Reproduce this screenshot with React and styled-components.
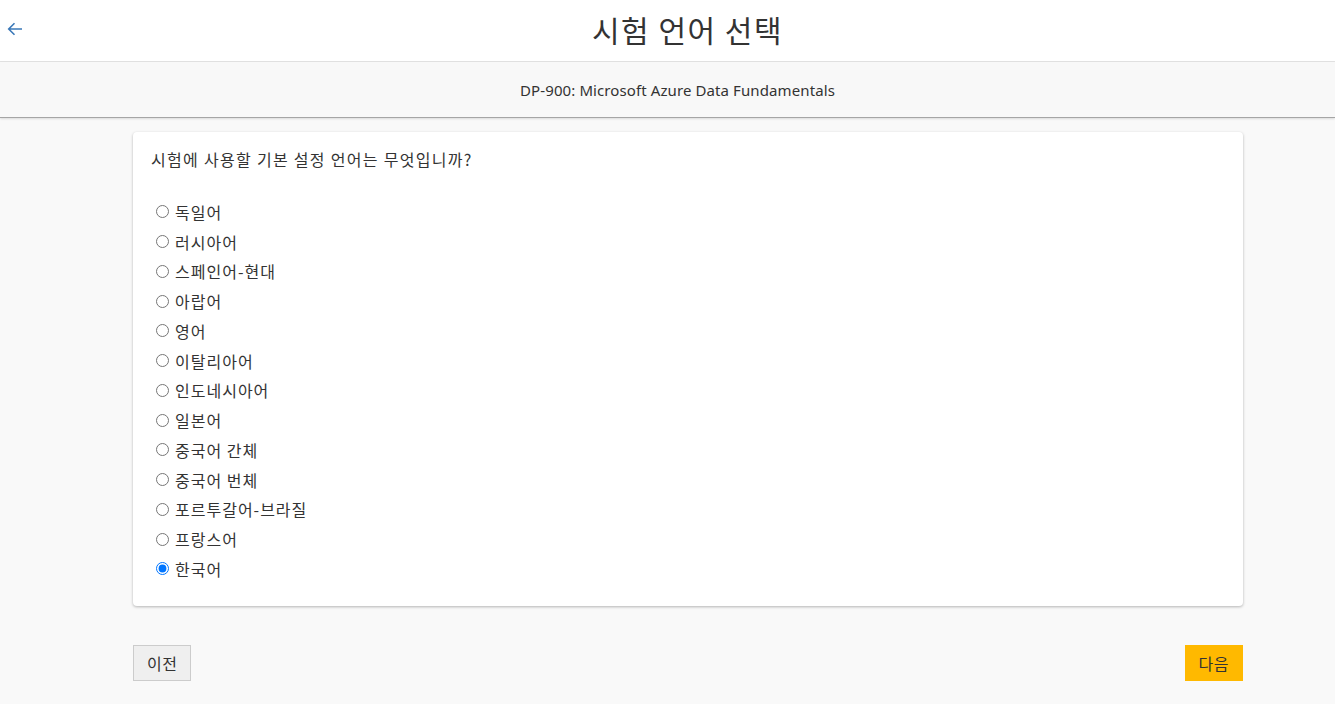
import React, { useState } from "react";
import styled, { createGlobalStyle } from "styled-components";

const Global = createGlobalStyle`
  html, body { margin: 0; padding: 0; }
  body {
    background: #f9f9f9;
    font-family: "Noto Sans CJK KR", "Noto Sans", sans-serif;
    color: #333;
  }
`;

const Page = styled.div`
  min-height: 704px;
  background: #f9f9f9;
`;

const Header = styled.header`
  height: 61px;
  background: #fff;
  border-bottom: 1px solid #e2e2e2;
  display: flex;
  align-items: center;
`;

const BackButton = styled.button`
  width: 40px;
  height: 61px;
  padding: 0 0 3px 7px;
  border: none;
  background: transparent;
  display: flex;
  align-items: center;
  justify-content: flex-start;
  cursor: pointer;
`;

const Title = styled.h1`
  flex: 1;
  margin: 0;
  text-align: center;
  font-size: 30px;
  font-weight: 400;
  letter-spacing: 1.5px;
  color: #333;
  line-height: 1;
  padding-bottom: 4px;
`;

const SubHeader = styled.div`
  height: 55px;
  padding-left: 20px;
  background: #f8f8f8;
  border-bottom: 1px solid #a5a5a5;
  box-shadow: 0 1px 2px rgba(0, 0, 0, 0.12);
  display: flex;
  align-items: center;
  justify-content: center;
  font-family: "Noto Sans", "Noto Sans CJK KR", sans-serif;
  font-size: 15px;
  letter-spacing: 0.1px;
  color: #333;
`;

const Main = styled.main`
  width: 1110px;
  margin-left: 133px;
  padding-top: 14px;
`;

const Card = styled.section`
  background: #fff;
  border-radius: 4px;
  box-shadow: 0 1px 3px rgba(0, 0, 0, 0.28);
  padding: 15px 18px 22px 18px;
`;

const Question = styled.p`
  margin: 0;
  font-size: 16px;
  line-height: 24px;
  color: #333;
  letter-spacing: 1.3px;
`;

const OptionList = styled.div`
  margin-top: 26px;
  display: flex;
  flex-direction: column;
`;

const Option = styled.label`
  display: flex;
  align-items: center;
  height: 29.75px;
  font-size: 16px;
  letter-spacing: 1px;
  color: #333;
  cursor: pointer;

  input {
    width: 13px;
    height: 13px;
    margin: 0 6px 0 5px;
    accent-color: #0075ff;
  }
`;

const Footer = styled.div`
  display: flex;
  justify-content: space-between;
  margin-top: 39px;
`;

const NavButton = styled.button`
  height: 36px;
  padding: 0 13px;
  font-family: "Noto Sans CJK KR", sans-serif;
  font-size: 16px;
  letter-spacing: 0.5px;
  color: #333;
  cursor: pointer;
  background: ${(p) => (p.$primary ? "#ffb900" : "#efefef")};
  border: 1px solid ${(p) => (p.$primary ? "#ffb900" : "#cccccc")};
  border-radius: 0;
`;

const languages = [
  "독일어",
  "러시아어",
  "스페인어-현대",
  "아랍어",
  "영어",
  "이탈리아어",
  "인도네시아어",
  "일본어",
  "중국어 간체",
  "중국어 번체",
  "포르투갈어-브라질",
  "프랑스어",
  "한국어",
];

export default function App() {
  const [lang, setLang] = useState("한국어");
  return (
    <Page>
      <Global />
      <Header>
        <BackButton aria-label="뒤로">
          <svg width="16" height="14" viewBox="0 0 16 14" fill="none">
            <path d="M15 7H2M7.5 1.2L1.7 7l5.8 5.8" stroke="#3a78b8" strokeWidth="1.6" />
          </svg>
        </BackButton>
        <Title>시험 언어 선택</Title>
      </Header>
      <SubHeader>DP-900: Microsoft Azure Data Fundamentals</SubHeader>
      <Main>
        <Card>
          <Question>시험에 사용할 기본 설정 언어는 무엇입니까?</Question>
          <OptionList>
            {languages.map((l) => (
              <Option key={l}>
                <input
                  type="radio"
                  name="lang"
                  checked={lang === l}
                  onChange={() => setLang(l)}
                />
                {l}
              </Option>
            ))}
          </OptionList>
        </Card>
        <Footer>
          <NavButton>이전</NavButton>
          <NavButton $primary>다음</NavButton>
        </Footer>
      </Main>
    </Page>
  );
}
